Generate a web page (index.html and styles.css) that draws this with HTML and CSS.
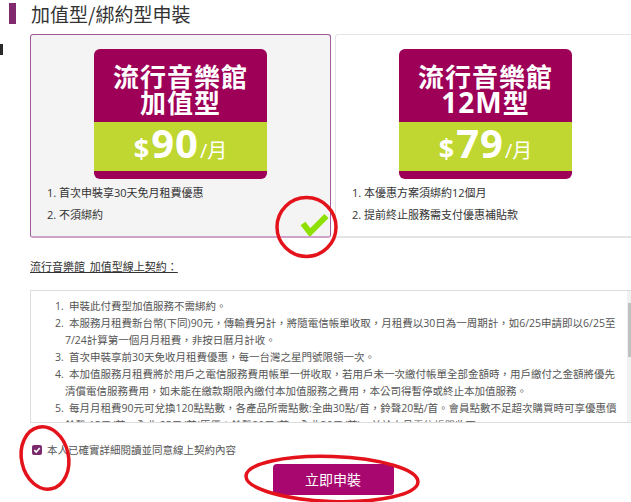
FILE: index.html
```html
<!DOCTYPE html>
<html lang="zh-Hant">
<head>
<meta charset="utf-8">
<title>加值型/綁約型申裝</title>
<link rel="stylesheet" href="styles.css">
</head>
<body>
<h2 class="page-title"><span class="title-bar"></span>加值型/綁約型申裝</h2>
<div class="main">
  <span class="edge-mark"></span>
  <div class="content">
    <div class="plans">
      <div class="plan plan-selected">
        <div class="banner">
          <div class="banner-name">流行音樂館<br>加值型</div>
          <div class="banner-price"><span class="cur">$</span><span class="amt">90</span><span class="per">/月</span></div>
        </div>
        <ul class="plan-notes">
          <li>1. 首次申裝享30天免月租費優惠</li>
          <li>2. 不須綁約</li>
        </ul>
        <svg class="check" width="30" height="24" viewBox="0 0 30 24"><path d="M3 11.5 L10 20.5 L26.5 4" fill="none" stroke="#8ee000" stroke-width="6"/></svg>
      </div>
      <div class="plan">
        <div class="banner">
          <div class="banner-name">流行音樂館<br><span class="latin">12M</span>型</div>
          <div class="banner-price"><span class="cur">$</span><span class="amt">79</span><span class="per">/月</span></div>
        </div>
        <ul class="plan-notes">
          <li>1. 本優惠方案須綁約12個月</li>
          <li>2. 提前終止服務需支付優惠補貼款</li>
        </ul>
      </div>
    </div>

    <p class="contract-title">流行音樂館_加值型線上契約：</p>

    <div class="contract">
      <div class="contract-body">
        <ol class="contract-list">
          <li><span class="num">1. </span>申裝此付費型加值服務不需綁約。</li>
          <li><span class="num">2. </span>本服務月租費新台幣(下同)90元，傳輸費另計，將隨電信帳單收取，月租費以30日為一周期計，如6/25申請即以6/25至7/24計算第一個月月租費，非按日曆月計收。</li>
          <li><span class="num">3. </span>首次申裝享前30天免收月租費優惠，每一台灣之星門號限領一次。</li>
          <li><span class="num">4. </span>本加值服務月租費將於用戶之電信服務費用帳單一併收取，若用戶未一次繳付帳單全部金額時，用戶繳付之金額將優先清償電信服務費用，如未能在繳款期限內繳付本加值服務之費用，本公司得暫停或終止本加值服務。</li>
          <li><span class="num">5. </span>每月月租費90元可兌換120點點數，各產品所需點數:全曲30點/首，鈴聲20點/首。會員點數不足超次購買時可享優惠價鈴聲 15元/首，全曲 25元/首(原價：鈴聲20元/首，全曲30元/首)，並於次月電信帳單收取。</li>
          <li><span class="num">6. </span>用戶得隨時申請退租本加值服務，退租後當期月租費仍依本契約約定收取，不另行退費。</li>
          <li><span class="num">7. </span>本契約未盡事宜，依台灣之星行動電話服務契約及相關法令規定辦理。</li>
        </ol>
      </div>
      <div class="scrollbar" aria-hidden="true">
        <span class="sb-btn"><svg width="7" height="4" viewBox="0 0 7 4"><path d="M0 4 L3.5 0 L7 4 Z" fill="#505050"/></svg></span>
        <span class="sb-thumb"></span>
        <span class="sb-btn sb-down"><svg width="7" height="4" viewBox="0 0 7 4"><path d="M0 0 L3.5 4 L7 0 Z" fill="#505050"/></svg></span>
      </div>
    </div>

    <label class="agree"><span class="agree-box"><svg width="8" height="8" viewBox="0 0 8 8"><path d="M1.3 4.2 L3.2 6 L6.8 2" fill="none" stroke="#fff" stroke-width="1.6"/></svg></span>本人已確實詳細閱讀並同意線上契約內容</label>

    <div class="actions">
      <button class="apply-btn" type="button">立即申裝</button>
    </div>
  </div>
</div>

<svg class="annotations" width="631" height="502" viewBox="0 0 631 502">
  <ellipse cx="306.5" cy="227" rx="29.5" ry="29.5" fill="none" stroke="#e3121b" stroke-width="3.5"/>
  <ellipse cx="45" cy="458" rx="23.5" ry="31.5" transform="rotate(-12 45 458)" fill="none" stroke="#e3121b" stroke-width="3.5"/>
  <ellipse cx="332" cy="479" rx="86" ry="22.5" transform="rotate(2 332 479)" fill="none" stroke="#e3121b" stroke-width="3.5"/>
</svg>
</body>
</html>
```

FILE: styles.css
```css
* {
  box-sizing: border-box;
}

html,
body {
  margin: 0;
  padding: 0;
  overflow: hidden;
  background: #fff;
}

body {
  position: relative;
  width: 631px;
  height: 502px;
  font-family: "Open Sans", "Noto Sans CJK TC", sans-serif;
  color: #333;
}

.page-title {
  display: flex;
  align-items: center;
  height: 21px;
  margin: 3px 0 0;
  font-family: "Noto Sans CJK TC", sans-serif;
  font-size: 19px;
  font-weight: normal;
  line-height: 21px;
  color: #333;
}

.title-bar {
  width: 7px;
  height: 21px;
  margin-left: 9px;
  margin-right: 15px;
  background: #80296f;
}

.main {
  display: flex;
  align-items: flex-start;
  margin-top: 10px;
}

.edge-mark {
  flex: none;
  width: 3px;
  height: 11px;
  margin-top: 10px;
  background: #2a2a2a;
}

.content {
  flex: none;
  width: 606px;
  margin-left: 27px;
}

.plans {
  display: flex;
  gap: 4px;
}

.plan {
  position: relative;
  flex: none;
  width: 301px;
  height: 204px;
  padding: 14px 16px 0;
  background: #fff;
  border: 1px solid #e4e4e4;
  border-bottom-width: 2px;
  border-radius: 3px;
}

.plan-selected {
  background: #f4f4f4;
  border-color: #a35a9a;
  border-bottom-color: #cfa3c9;
}

.banner {
  display: flex;
  flex-direction: column;
  width: 173px;
  height: 130px;
  margin: 0 auto;
  padding-top: 14px;
  overflow: hidden;
  background: #9e0058;
  border-radius: 6px;
  color: #fff;
}

.banner-name {
  height: 59px;
  font-family: "Noto Sans CJK TC", sans-serif;
  font-size: 26px;
  font-weight: bold;
  line-height: 26px;
  letter-spacing: 1px;
  text-align: center;
}

.banner-name .latin {
  font-family: "Open Sans", sans-serif;
  font-size: 28px;
  letter-spacing: 1px;
}

.banner-price {
  display: flex;
  align-items: baseline;
  justify-content: center;
  height: 49px;
  padding-top: 1px;
  background: #bfd730;
}

.cur {
  font-size: 27px;
  font-weight: bold;
  line-height: 40px;
}

.amt {
  font-size: 40px;
  font-weight: bold;
  line-height: 40px;
  letter-spacing: 1px;
  margin-left: 2px;
}

.per {
  margin-left: 1px;
  font-family: "Open Sans", "Noto Sans CJK TC", sans-serif;
  font-size: 20px;
  line-height: 40px;
}

.plan-notes {
  margin: 3px 0 0;
  padding: 0;
  list-style: none;
  font-size: 11px;
  line-height: 22px;
  color: #333;
}

.check {
  position: absolute;
  right: 0;
  bottom: 0;
}

.contract-title {
  margin: 21px 0 0;
  font-size: 11px;
  line-height: 16px;
  text-decoration: underline;
  color: #333;
}

.contract {
  display: flex;
  height: 133px;
  margin: 15px -7px 0 0;
  border: 1px solid #dcdcdc;
  background: #fff;
}

.contract-body {
  flex: 1;
  min-width: 0;
  padding: 7px 6px 0 24px;
  overflow: hidden;
}

.scrollbar {
  display: flex;
  flex: none;
  flex-direction: column;
  width: 15px;
  background: #f1f1f1;
}

.sb-btn {
  display: flex;
  align-items: center;
  justify-content: center;
  height: 12px;
}

.sb-down {
  margin-top: auto;
}

.sb-thumb {
  height: 54px;
  margin: 0 1px;
  background: #c1c1c1;
}

.contract-list {
  margin: 0;
  padding: 0;
  list-style: none;
  font-size: 10.5px;
  line-height: 17px;
  color: #555;
}

.contract-list li {
  padding-left: 10px;
  text-indent: -10px;
}

.contract-list .num {
  display: inline-block;
  width: 14px;
  text-indent: 0;
}

.agree {
  display: flex;
  align-items: center;
  height: 14px;
  margin: 20px 0 0 2px;
  font-size: 10.5px;
  line-height: 14px;
  color: #555;
}

.agree-box {
  display: flex;
  align-items: center;
  justify-content: center;
  width: 10px;
  height: 10px;
  margin-right: 5px;
  background: #7b2a6c;
  border-radius: 2px;
}

.actions {
  display: flex;
  justify-content: center;
  margin-top: 7px;
}

.apply-btn {
  width: 121px;
  height: 31px;
  padding: 0;
  border: 0;
  border-radius: 4px;
  background: #a8076f;
  color: #fff;
  font-family: "Noto Sans CJK TC", sans-serif;
  font-size: 14px;
  line-height: 31px;
}

.annotations {
  position: absolute;
  top: 0;
  left: 0;
  pointer-events: none;
}
```
